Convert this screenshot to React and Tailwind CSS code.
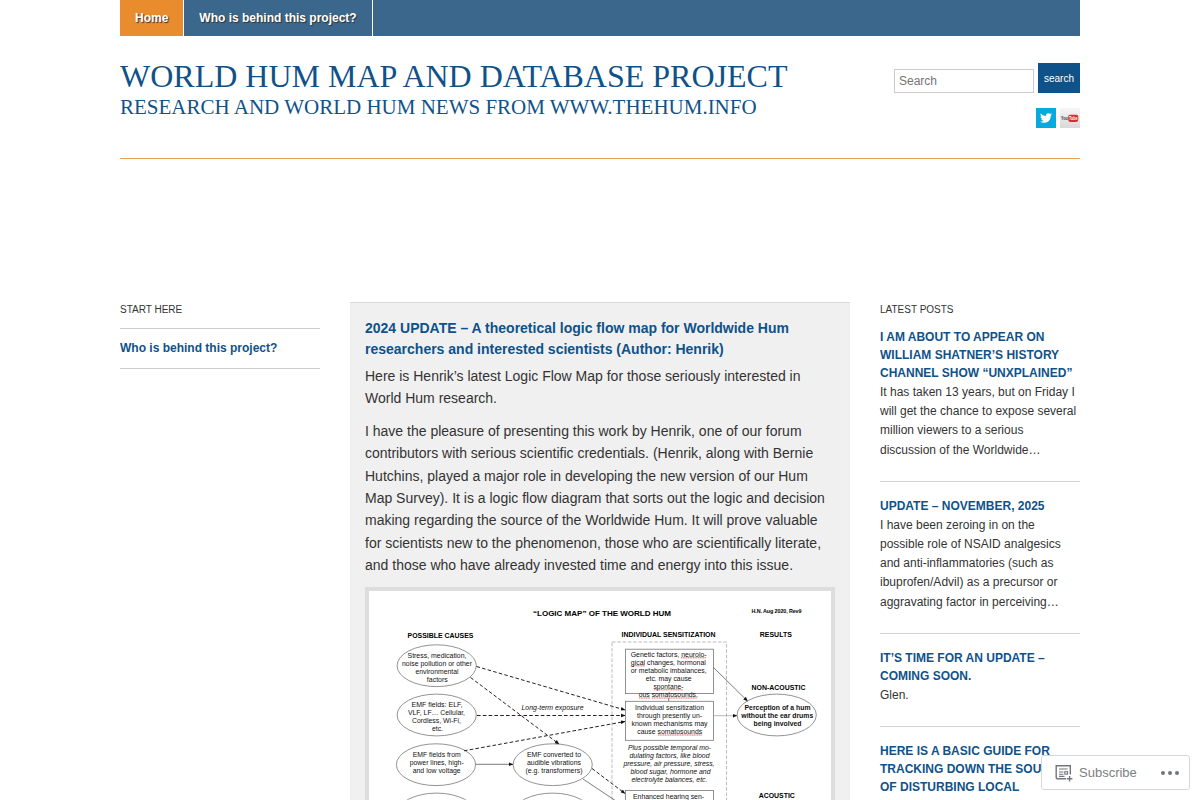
import { FaTwitter } from 'react-icons/fa';

const posts = [
  {
    title: 'I am about to appear on William Shatner’s History Channel show “UnXplained”',
    text: 'It has taken 13 years, but on Friday I will get the chance to expose several million viewers to a serious discussion of the Worldwide…',
  },
  {
    title: 'Update – November, 2025',
    text: 'I have been zeroing in on the possible role of NSAID analgesics and anti-inflammatories (such as ibuprofen/Advil) as a precursor or aggravating factor in perceiving…',
  },
  {
    title: 'It’s time for an update – coming soon.',
    text: 'Glen.',
  },
  {
    title: 'Here is a basic guide for tracking down the source of disturbing local',
    text: '',
  },
];

// each line: [text, centre x, baseline y, width]
const labels = [
  ['Stress, medication,', 437, 657.6, 59],
  ['noise pollution or other', 437, 665.6, 70],
  ['environmental', 437, 673.6, 43],
  ['factors', 437.3, 681.6, 21],
  ['EMF fields: ELF,', 437, 707, 51],
  ['VLF, LF… Cellular,', 436.5, 715.2, 57],
  ['Cordless, Wi-Fi,', 436.5, 723.2, 49],
  ['etc.', 437.5, 731.4, 11],
  ['EMF fields from', 436.7, 756.8, 48],
  ['power lines, high-', 436.7, 764.8, 54],
  ['and low voltage', 436.7, 772.8, 48],
  ['EMF converted to', 554, 756.6, 54],
  ['audible vibrations', 554, 764.8, 54],
  ['(e.g. transformers)', 554, 772.8, 57],
  ['Genetic factors, neurolo-', 668.7, 656.8, 76],
  ['gical changes, hormonal', 668.3, 664.8, 75],
  ['or metabolic imbalances,', 668.7, 672.8, 76],
  ['etc. may cause', 668.7, 680.8, 46],
  ['spontane-', 668.5, 688.8, 30],
  ['ous somatosounds.', 668.3, 697, 59],
  ['Individual sensitization', 669.5, 710, 69],
  ['through presently un-', 669.5, 718, 65],
  ['known mechanisms may', 669.5, 726, 76],
  ['cause somatosounds', 669.7, 734, 65],
  ['Enhanced hearing sen-', 668.5, 799, 71],
];

const boldLabels = [
  ['Perception of a hum', 777.5, 710, 66],
  ['without the ear drums', 777.3, 718, 72],
  ['being involved', 777.5, 726, 48],
];

const italicLabels = [
  ['Long-term exposure', 552.5, 710, 62],
  ['Plus possible temporal mo-', 669.5, 750, 83],
  ['dulating factors, like blood', 669.5, 758, 80],
  ['pressure, air pressure, stress,', 669, 766, 91],
  ['blood sugar, hormone and', 670.5, 774, 80],
  ['electrolyte balances, etc.', 669.5, 782, 76],
];

const headings = [
  ['“LOGIC MAP” OF THE WORLD HUM', 602, 615.8, 138],
  ['POSSIBLE CAUSES', 440.5, 638, 66],
  ['INDIVIDUAL SENSITIZATION', 668.5, 636.8, 94],
  ['RESULTS', 775.8, 636.8, 32],
  ['NON-ACOUSTIC', 778.5, 689.8, 54],
  ['ACOUSTIC', 776.8, 798, 36],
];

const ellipses = [
  [436.7, 665.7],
  [436.7, 715],
  [436, 764.7],
  [552.7, 764.7],
  [436.5, 814],
  [552.5, 814],
  [776.7, 715],
];

const typos = [
  [681, 657.8, 25],
  [631, 665.8, 14],
  [654, 689.8, 29],
  [639, 698, 11],
  [652, 698, 45],
  [658, 735, 44],
];

function Lines({ items }) {
  return items.map(([text, x, y, width]) => (
    <text key={text} x={x} y={y} textAnchor="middle" textLength={width} lengthAdjust="spacingAndGlyphs">
      {text}
    </text>
  ));
}

function LogicMap() {
  return (
    <svg viewBox="369 591 462 260" className="block h-[260px] w-[462px] bg-white font-['Liberation_Sans',sans-serif]">
      <defs>
        <marker id="arrow" viewBox="0 0 6 6" refX="5.5" refY="3" markerWidth="4.5" markerHeight="4.5" markerUnits="userSpaceOnUse" orient="auto">
          <path d="M0 0.5 L6 3 L0 5.5 Z" fill="#111" />
        </marker>
      </defs>

      <rect x="612" y="642" width="114.5" height="240" fill="none" stroke="#aaa" strokeWidth="0.8" strokeDasharray="3.5 1.8" />
      <g fill="#fff" stroke="#777" strokeWidth="0.8">
        {ellipses.map(([cx, cy]) => (
          <ellipse key={`${cx}-${cy}`} cx={cx} cy={cy} rx="39.6" ry="20.9" />
        ))}
        <rect x="625.4" y="649.2" width="88.1" height="44.4" />
        <rect x="625.4" y="701.3" width="88.1" height="39" />
        <rect x="625.4" y="790.4" width="88.1" height="40" />
      </g>

      <g stroke="#222" strokeWidth="1" strokeDasharray="3.6 2.2" markerEnd="url(#arrow)">
        <path d="M476.5 666.5 L625 710" markerEnd="url(#arrow)" />
        <path d="M477 715.5 H625" markerEnd="url(#arrow)" />
        <path d="M464 750.8 L625 721.5" markerEnd="url(#arrow)" />
        <path d="M470.5 677.5 L559 744" />
        <path d="M592 768.5 L625 793.5" markerEnd="url(#arrow)" />
      </g>
      <g stroke="#444" strokeWidth="0.7">
        <path d="M475.7 764.3 H513" markerEnd="url(#arrow)" />
        <path d="M583 779 L625 807" />
        <path d="M713.5 667.5 L747.5 701" markerEnd="url(#arrow)" />
        <path d="M713.5 715.7 H737" stroke="#999" markerEnd="url(#arrow)" />
        <path d="M668.7 698 V701" />
      </g>

      <g stroke="#d33" strokeWidth="0.8" strokeDasharray="1.2 0.5">
        {typos.map(([x, y, width]) => (
          <path key={`${x}-${y}`} d={`M${x} ${y} h${width}`} />
        ))}
      </g>

      <g fontSize="6.7" fill="#111">
        <Lines items={labels} />
        <g fontWeight="bold">
          <Lines items={boldLabels} />
        </g>
        <g fontStyle="italic">
          <Lines items={italicLabels} />
        </g>
      </g>
      <g fontSize="7" fontWeight="bold" fill="#000">
        <Lines items={headings} />
      </g>
      <text x="776.5" y="613.2" textAnchor="middle" textLength="50" fontSize="5.4" fontWeight="bold">
        H.N. Aug 2020, Rev9
      </text>
    </svg>
  );
}

function SubscribeBar() {
  return (
    <div className="fixed bottom-[10px] right-[10px] flex h-[35px] w-[149px] items-center rounded-[3px] border border-[#d5d9dc] bg-white pl-[13px] pr-[9px] text-[13px] text-[#7c7f82]">
      <svg viewBox="0 0 18 18" className="mr-[6px] h-[18px] w-[18px]" fill="none" stroke="#72777c" strokeWidth="1.4">
        <path d="M11 14.8 H2.8 Q1.2 14.8 1.2 13.2 V1.7 H15.3 V10.5" />
        <path d="M4 5 H12.6 M4 8 H8.4 M4 10.2 H8.4 M4 12.4 H9.5" strokeWidth="1.1" />
        <rect x="9.8" y="7.7" width="2.8" height="2.4" strokeWidth="1.1" />
        <path d="M14.6 12 V17.6 M11.8 14.8 H17.4" />
      </svg>
      <span>Subscribe</span>
      <svg viewBox="0 0 20 6" className="ml-auto h-[6px] w-[20px]" fill="#72777c">
        <circle cx="3" cy="3" r="2" />
        <circle cx="10" cy="3" r="2" />
        <circle cx="17" cy="3" r="2" />
      </svg>
    </div>
  );
}

export default function App() {
  return (
    <div className="h-screen overflow-hidden bg-white font-['Liberation_Sans',Arial,sans-serif] text-[#333]">
      <div className="mx-auto w-[960px]">
        <nav className="flex h-9 bg-[#3c678d] text-xs font-bold leading-9 text-white [text-shadow:1px_1px_1px_#333]">
          <a className="border-r border-white bg-[#e98c2e] px-[15px]">Home</a>
          <a className="border-r border-white px-[15px]">Who is behind this project?</a>
        </nav>

        <header className="flex h-[123px] justify-between border-b border-[#e5a157]">
          <div className="whitespace-nowrap pt-[22px] font-['Liberation_Serif',serif] uppercase text-[#0f5289]">
            <h1 className="text-[32px] leading-9">World Hum Map and Database Project</h1>
            <h2 className="text-[21px] leading-[26px]">Research and World Hum news from www.thehum.info</h2>
          </div>
          <div className="flex flex-col items-end pt-[27px]">
            <div className="flex items-end gap-1">
              <input
                placeholder="Search"
                className="h-6 w-[140px] border border-[#ccc] px-1 text-xs placeholder:text-[#757575]"
              />
              <button className="h-[30px] w-[42px] bg-[#0f5289] text-[10px] text-white">search</button>
            </div>
            <div className="mt-[15px] flex gap-1">
              <span className="flex h-5 w-5 items-center justify-center bg-[#08a9dc] text-white">
                <FaTwitter size={12} />
              </span>
              <span className="flex h-5 w-5 items-center justify-center bg-linear-to-b from-[#f6f6f6] to-[#d8d8d8]">
                <svg viewBox="0 0 20 20" className="h-5 w-5 font-['Liberation_Sans',sans-serif]" fontSize="6" fontWeight="bold">
                  <rect x="8.2" y="6.7" width="10" height="7.2" rx="1.8" fill="#d7302c" />
                  <text x="1" y="12.4" textLength="6.7" lengthAdjust="spacingAndGlyphs" fill="#333">You</text>
                  <text x="9" y="12.4" textLength="8.4" lengthAdjust="spacingAndGlyphs" fill="#fff">Tube</text>
                </svg>
              </span>
            </div>
          </div>
        </header>

        <div className="mt-[143px] flex items-start gap-[30px]">
          <aside className="w-[200px]">
            <h3 className="pb-[11px] text-[10px] uppercase leading-[15px]">Start here</h3>
            <div className="border-y border-[#ccc] text-xs font-bold leading-[39px] text-[#0f5289]">
              Who is behind this project?
            </div>
          </aside>

          <main className="w-[500px] border-t border-[#d8d8d8] bg-[#f0f0f0] px-[15px] pt-[15px] text-sm leading-[22.4px]">
            <h2 className="mb-[5px] font-bold leading-[21px] text-[#0f5289]">
              2024 UPDATE – A theoretical logic flow map for Worldwide Hum researchers and interested scientists (Author: Henrik)
            </h2>
            <p className="mb-[10px]">
              Here is Henrik’s latest Logic Flow Map for those seriously interested in World Hum research.
            </p>
            <p className="mb-[10px]">
              I have the pleasure of presenting this work by Henrik, one of our forum contributors with serious
              scientific credentials. (Henrik, along with Bernie Hutchins, played a major role in developing the new
              version of our Hum Map Survey). It is a logic flow diagram that sorts out the logic and decision making
              regarding the source of the Worldwide Hum. It will prove valuable for scientists new to the phenomenon,
              those who are scientifically literate, and those who have already invested time and energy into this
              issue.
            </p>
            <div className="border-4 border-[#ddd]">
              <LogicMap />
            </div>
          </main>

          <aside className="w-[200px] text-xs">
            <h3 className="mb-[11px] text-[10px] uppercase leading-[15px]">Latest posts</h3>
            {posts.map((post) => (
              <div key={post.title} className="mb-[15px] border-b border-[#d4d4d4] pb-[21px]">
                <h4 className="mb-px font-bold uppercase leading-[18px] text-[#0f5289]">{post.title}</h4>
                <p className="leading-[19.2px]">{post.text}</p>
              </div>
            ))}
          </aside>
        </div>
      </div>

      <SubscribeBar />
    </div>
  );
}
